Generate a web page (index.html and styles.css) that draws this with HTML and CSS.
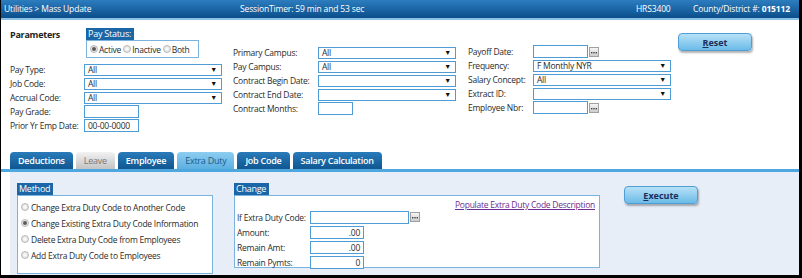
FILE: index.html
```html
<!DOCTYPE html>
<html lang="en">
<head>
    <meta charset="UTF-8">
    <meta name="viewport" content="width=device-width, initial-scale=1.0">
    <title>Mass Update</title>
    <link rel="stylesheet" href="styles.css">
</head>
<body>
<div class="page">
    <header class="topbar">
        <span class="crumb">Utilities &gt; Mass Update</span>
        <span class="timer">SessionTimer: 59 min and 53 sec</span>
        <span class="code">HRS3400</span>
        <span class="district">County/District #: <b>015112</b></span>
    </header>

    <section class="params">
        <div class="col col-left">
            <div class="title-row">
                <h3>Parameters</h3>
                <div class="group paystatus">
                    <div class="legend">Pay Status:</div>
                    <div class="group-box radios-inline">
                        <label><span class="radio checked"></span>Active</label>
                        <label><span class="radio"></span>Inactive</label>
                        <label><span class="radio"></span>Both</label>
                    </div>
                </div>
            </div>
            <div class="fields fields-left">
                <label>Pay Type:</label>
                <div class="select"><span>All</span><span class="arrow">&#9660;</span></div>
                <label>Job Code:</label>
                <div class="select"><span>All</span><span class="arrow">&#9660;</span></div>
                <label>Accrual Code:</label>
                <div class="select"><span>All</span><span class="arrow">&#9660;</span></div>
                <label>Pay Grade:</label>
                <div class="input short"></div>
                <label>Prior Yr Emp Date:</label>
                <div class="input short">00-00-0000</div>
            </div>
        </div>

        <div class="col col-mid fields fields-mid">
            <label>Primary Campus:</label>
            <div class="select"><span>All</span><span class="arrow">&#9660;</span></div>
            <label>Pay Campus:</label>
            <div class="select"><span>All</span><span class="arrow">&#9660;</span></div>
            <label>Contract Begin Date:</label>
            <div class="select"><span></span><span class="arrow">&#9660;</span></div>
            <label>Contract End Date:</label>
            <div class="select"><span></span><span class="arrow">&#9660;</span></div>
            <label>Contract Months:</label>
            <div class="input tiny"></div>
        </div>

        <div class="col col-right fields fields-right">
            <label>Payoff Date:</label>
            <div class="lookup">
                <div class="input short"></div>
                <span class="dots"><svg width="8" height="8" viewBox="0 0 8 8"><rect x="1" y="4" width="1.4" height="1.4" fill="#444"/><rect x="3.3" y="4" width="1.4" height="1.4" fill="#444"/><rect x="5.6" y="4" width="1.4" height="1.4" fill="#444"/></svg></span>
            </div>
            <label>Frequency:</label>
            <div class="select"><span>F Monthly NYR</span><span class="arrow">&#9660;</span></div>
            <label>Salary Concept:</label>
            <div class="select"><span>All</span><span class="arrow">&#9660;</span></div>
            <label>Extract ID:</label>
            <div class="select"><span></span><span class="arrow">&#9660;</span></div>
            <label>Employee Nbr:</label>
            <div class="lookup">
                <div class="input short"></div>
                <span class="dots"><svg width="8" height="8" viewBox="0 0 8 8"><rect x="1" y="4" width="1.4" height="1.4" fill="#444"/><rect x="3.3" y="4" width="1.4" height="1.4" fill="#444"/><rect x="5.6" y="4" width="1.4" height="1.4" fill="#444"/></svg></span>
            </div>
        </div>

        <button class="btn reset"><u>R</u>eset</button>
    </section>

    <nav class="tabs">
        <span class="tab">Deductions</span>
        <span class="tab disabled">Leave</span>
        <span class="tab">Employee</span>
        <span class="tab active">Extra Duty</span>
        <span class="tab">Job Code</span>
        <span class="tab">Salary Calculation</span>
    </nav>

    <section class="panel">
        <div class="group method">
            <div class="legend">Method</div>
            <div class="group-box radios-stack">
                <label><span class="radio"></span>Change Extra Duty Code to Another Code</label>
                <label><span class="radio checked"></span>Change Existing Extra Duty Code Information</label>
                <label><span class="radio"></span>Delete Extra Duty Code from Employees</label>
                <label><span class="radio"></span>Add Extra Duty Code to Employees</label>
            </div>
        </div>

        <div class="group change">
            <div class="legend">Change</div>
            <div class="group-box change-box">
                <a class="populate" href="#">Populate Extra Duty Code Description</a>
                <div class="fields fields-change">
                    <label>If Extra Duty Code:</label>
                    <div class="lookup">
                        <div class="input wide"></div>
                        <span class="dots"><svg width="8" height="8" viewBox="0 0 8 8"><rect x="1" y="4" width="1.4" height="1.4" fill="#444"/><rect x="3.3" y="4" width="1.4" height="1.4" fill="#444"/><rect x="5.6" y="4" width="1.4" height="1.4" fill="#444"/></svg></span>
                    </div>
                    <label>Amount:</label>
                    <div class="input num">.00</div>
                    <label>Remain Amt:</label>
                    <div class="input num">.00</div>
                    <label>Remain Pymts:</label>
                    <div class="input num">0</div>
                </div>
            </div>
        </div>

        <button class="btn execute"><u>E</u>xecute</button>
    </section>
</div>
</body>
</html>
```

FILE: styles.css
```css
* {
    margin: 0;
    padding: 0;
    box-sizing: border-box;
}

body {
    background: #000;
    font-family: "Open Sans", Arial, sans-serif;
    font-size: 8.5px;
    letter-spacing: -0.25px;
    color: #2a2a2a;
}

.page {
    width: 798px;
    height: 275px;
    margin-left: 1px;
    background: #fff;
    overflow: hidden;
}

/* header bar */
.topbar {
    height: 20px;
    display: flex;
    align-items: center;
    padding: 0 0 2px 3px;
    color: #fff;
    font-size: 8.5px;
    letter-spacing: -0.15px;
    white-space: nowrap;
    background: linear-gradient(#2c7dbf, #0b4e8b);
    border-bottom: 2px solid #8cc0e6;
}

.crumb {
    width: 236px;
}

.timer {
    width: 396px;
}

.code {
    width: 57px;
}

/* parameters */
.params {
    display: flex;
    align-items: flex-start;
    padding: 8px 0 0 9px;
    height: 132px;
}

.title-row {
    display: flex;
    align-items: flex-start;
}

h3 {
    font-size: 9px;
    font-weight: bold;
    width: 76px;
    color: #222;
}

.group .legend {
    display: inline-block;
    background: #1a66a6;
    color: #fff;
    padding: 0 3px 1px 2px;
    font-size: 9px;
    line-height: 11px;
}

.group-box {
    border: 1px solid #7ab4de;
    background: #fff;
}

.radios-inline {
    display: flex;
    gap: 2px;
    height: 18px;
    align-items: center;
    padding-left: 3px;
    width: 113px;
}

.radios-inline label,
.radios-stack label {
    display: flex;
    align-items: center;
}

.radio {
    width: 8px;
    height: 8px;
    border-radius: 50%;
    border: 1px solid #b8b8b8;
    background: radial-gradient(#fff, #d6d6d6);
    margin-right: 1px;
    display: inline-flex;
    align-items: center;
    justify-content: center;
}

.radio.checked::after {
    content: "";
    width: 4px;
    height: 4px;
    border-radius: 50%;
    background: #5a5a5a;
}

.fields {
    display: grid;
    grid-auto-rows: 13px;
    row-gap: 1px;
    align-items: center;
}

.fields label {
    white-space: nowrap;
}

.fields-left {
    grid-template-columns: 74px 138px;
    margin-top: 5px;
}

.col-mid {
    grid-template-columns: 85px 138px;
    margin: 18px 0 0 11px;
}

.col-right {
    grid-template-columns: 65px 138px;
    margin: 17px 0 0 12px;
}

.select {
    height: 12px;
    border: 1px solid #4e9cd6;
    display: flex;
    justify-content: space-between;
    align-items: center;
    padding: 0 4px 0 3px;
    background: #fff;
}

.arrow {
    font-size: 7px;
    color: #111;
}

.input {
    height: 13px;
    border: 1px solid #4e9cd6;
    padding: 0 3px;
    line-height: 11px;
    background: #fff;
}

.short {
    width: 55px;
}

.tiny {
    width: 35px;
}

.wide {
    width: 99px;
}

.num {
    width: 54px;
    text-align: right;
}

.lookup {
    display: flex;
    align-items: center;
    gap: 1px;
}

.dots {
    width: 10px;
    height: 10px;
    border: 1px solid #a0a0a0;
    background: linear-gradient(#f6f6f6, #cdcdcd);
    display: flex;
    align-items: center;
    justify-content: center;
}

/* buttons */
.btn {
    width: 74px;
    height: 18px;
    border: 1px solid #4f9ed4;
    border-radius: 4px;
    background: linear-gradient(#b8e1f7, #6bbbe8);
    box-shadow: 1px 2px 2px rgba(0, 0, 0, 0.3);
    font-family: "Open Sans", Arial, sans-serif;
    font-size: 9px;
    font-weight: bold;
    color: #1c2e5a;
}

.reset {
    margin: 5px 0 0 7px;
}

/* tabs */
.tabs {
    display: flex;
    gap: 3px;
    padding-left: 9px;
    border-bottom: 3px solid #4ea7de;
}

.tab {
    height: 17px;
    padding: 0 8px;
    border-radius: 4px 4px 0 0;
    background: linear-gradient(#2a7bba, #0f5791);
    color: #fff;
    font-size: 9px;
    font-weight: 600;
    display: flex;
    align-items: center;
}

.tab.disabled {
    background: linear-gradient(#f2f2f2, #c3c3c3);
    color: #777;
    font-weight: normal;
}

.tab.active {
    background: linear-gradient(#8dcdf0, #5cb0e2);
    color: #1d5a8c;
    font-weight: normal;
}

/* extra duty panel */
.panel {
    margin-left: 9px;
    height: 103px;
    background: #e7eef8;
    display: flex;
    align-items: flex-start;
    padding: 11px 0 0 7px;
}

.method .group-box {
    width: 196px;
    height: 79px;
}

.radios-stack {
    display: flex;
    flex-direction: column;
    padding: 3px 0 0 3px;
}

.radios-stack label {
    height: 16px;
    gap: 1px;
}

.change {
    margin-left: 21px;
}

.change-box {
    width: 366px;
    height: 73px;
    display: flex;
    flex-direction: column;
    padding: 3px 4px 0 2px;
}

.populate {
    align-self: flex-end;
    color: #6b2d8f;
    height: 11px;
}

.fields-change {
    grid-template-columns: 73px auto;
    grid-auto-rows: 14px;
    justify-content: start;
}

.execute {
    margin: 3px 0 0 24px;
}
```
